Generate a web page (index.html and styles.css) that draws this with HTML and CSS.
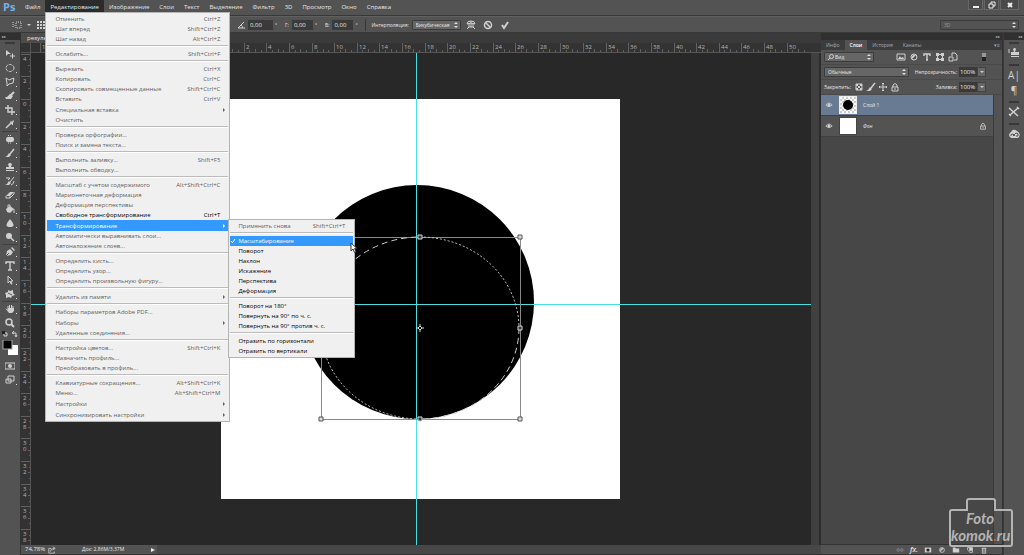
FILE: index.html
```html
<!DOCTYPE html>
<html lang="ru">

<head>
  <meta charset="UTF-8">
  <meta name="viewport" content="width=device-width, initial-scale=1.0">
  <title>Photoshop</title>
  <link rel="stylesheet" href="styles.css">
</head>

<body>
  <header class="menubar">
    <span class="logo">Ps</span>
    <nav class="menus">
      <button>Файл</button>
      <div class="menu-open">
        <button class="active">Редактирование</button>
        <ul class="menu">
          <li><button>Отменить<kbd>Ctrl+Z</kbd></button></li>
          <li><button>Шаг вперед<kbd>Shift+Ctrl+Z</kbd></button></li>
          <li><button>Шаг назад<kbd>Alt+Ctrl+Z</kbd></button></li>
          <li class="sep"></li>
          <li><button>Ослабить...<kbd>Shift+Ctrl+F</kbd></button></li>
          <li class="sep"></li>
          <li><button>Вырезать<kbd>Ctrl+X</kbd></button></li>
          <li><button>Копировать<kbd>Ctrl+C</kbd></button></li>
          <li><button>Скопировать совмещенные данные<kbd>Shift+Ctrl+C</kbd></button></li>
          <li><button>Вставить<kbd>Ctrl+V</kbd></button></li>
          <li><button class="more">Специальная вставка</button></li>
          <li><button>Очистить</button></li>
          <li class="sep"></li>
          <li><button>Проверка орфографии...</button></li>
          <li><button>Поиск и замена текста...</button></li>
          <li class="sep"></li>
          <li><button>Выполнить заливку...<kbd>Shift+F5</kbd></button></li>
          <li><button>Выполнить обводку...</button></li>
          <li class="sep"></li>
          <li><button>Масштаб с учетом содержимого<kbd>Alt+Shift+Ctrl+C</kbd></button></li>
          <li><button>Марионеточная деформация</button></li>
          <li><button>Деформация перспективы</button></li>
          <li><button class="on">Свободное трансформирование<kbd>Ctrl+T</kbd></button></li>
          <li class="has-sub">
            <button class="more hover">Трансформирование</button>
            <ul class="menu submenu">
              <li><button>Применить снова<kbd>Shift+Ctrl+T</kbd></button></li>
              <li class="sep"></li>
              <li><button class="hover checked">
                <svg class="check" viewBox="0 0 6 6"><path d="M1 3l1.500 1.800L5 1" /></svg>Масштабирование</button></li>
              <li><button class="on">Поворот</button></li>
              <li><button class="on">Наклон</button></li>
              <li><button class="on">Искажение</button></li>
              <li><button class="on">Перспектива</button></li>
              <li><button class="on">Деформация</button></li>
              <li class="sep"></li>
              <li><button class="on">Поворот на 180°</button></li>
              <li><button class="on">Повернуть на 90° по ч. с.</button></li>
              <li><button class="on">Повернуть на 90° против ч. с.</button></li>
              <li class="sep"></li>
              <li><button class="on">Отразить по горизонтали</button></li>
              <li><button class="on">Отразить по вертикали</button></li>
            </ul>
            <svg class="cursor" viewBox="0 0 8 12"><path d="M1 1v8l2-2 1.500 3.500 1.500-.7L4.600 6.500H7z" /></svg>
          </li>
          <li><button>Автоматически выравнивать слои...</button></li>
          <li><button>Автоналожение слоев...</button></li>
          <li class="sep"></li>
          <li><button>Определить кисть...</button></li>
          <li><button>Определить узор...</button></li>
          <li><button>Определить произвольную фигуру...</button></li>
          <li class="sep"></li>
          <li><button class="more">Удалить из памяти</button></li>
          <li class="sep"></li>
          <li><button>Наборы параметров Adobe PDF...</button></li>
          <li><button class="more">Наборы</button></li>
          <li><button>Удаленные соединения...</button></li>
          <li class="sep"></li>
          <li><button>Настройка цветов...<kbd>Shift+Ctrl+K</kbd></button></li>
          <li><button>Назначить профиль...</button></li>
          <li><button>Преобразовать в профиль...</button></li>
          <li class="sep"></li>
          <li><button>Клавиатурные сокращения...<kbd>Alt+Shift+Ctrl+K</kbd></button></li>
          <li><button>Меню...<kbd>Alt+Shift+Ctrl+M</kbd></button></li>
          <li><button class="more">Настройки</button></li>
          <li><button class="more">Синхронизировать настройки</button></li>
        </ul>
      </div>
      <button>Изображение</button>
      <button>Слои</button>
      <button>Текст</button>
      <button>Выделение</button>
      <button>Фильтр</button>
      <button>3D</button>
      <button>Просмотр</button>
      <button>Окно</button>
      <button>Справка</button>
    </nav>
    <div class="window-buttons">
      <button aria-label="Свернуть"><svg viewBox="0 0 8 8"><path d="M1 6h6" stroke-width="2" /></svg></button>
      <button aria-label="Развернуть"><svg viewBox="0 0 8 8"><path d="M3 3V1h4v4H5M1 3h4v4H1z" /></svg></button>
      <button class="close" aria-label="Закрыть"><svg viewBox="0 0 8 8"><path d="M2 2l4 4M6 2L2 6" stroke-width="2" /></svg></button>
    </div>
  </header>

  <div class="options">
    <div class="preset">
      <svg class="icon" viewBox="0 0 10 10"><path d="M1 2v5l2-2M4 2h5v6H4z" stroke-dasharray="1 1" /></svg>
      <i class="caret"></i>
      <svg class="icon" viewBox="0 0 10 10"><path class="fill" d="M1 1h2v2H1zM4 1h2v2H4zM7 1h2v2H7zM1 4h2v2H1zM4 4h2v2H4zM7 4h2v2H7zM1 7h2v2H1zM4 7h2v2H4zM7 7h2v2H7z" /></svg>
    </div>
    <svg class="icon angle" viewBox="0 0 10 10"><path d="M8 2L2 8h7M5 5c1 .500 1.500 2 1.500 3" /></svg>
    <input class="wide" aria-label="Угол" value="0,00"><span class="deg">°</span>
    <label for="skew-h">Г:</label><input id="skew-h" value="0,00"><span class="deg">°</span>
    <label for="skew-v">В:</label><input id="skew-v" value="0,00"><span class="deg">°</span>
    <i class="divider"></i>
    <label for="interp">Интерполяция:</label>
    <select id="interp"><option>Бикубическая</option></select>
    <div class="actions">
      <button aria-label="Деформация"><svg class="icon" viewBox="0 0 10 10"><path d="M1 4q0-3 4-3t4 3q-4-2-8 0zM3 3v4M7 3v4M5 1v6M3 7h4M1 9l2-2M9 9L7 7" /></svg></button>
      <button aria-label="Отмена"><svg class="icon" viewBox="0 0 10 10"><g stroke-width="1.500"><circle cx="5" cy="5" r="3.500" /><path d="M2.500 2.500l5 5" /></g></svg></button>
      <button aria-label="Применить"><svg class="icon" viewBox="0 0 10 10"><path d="M2 5l2 3 4-6" stroke-width="2" /></svg></button>
    </div>
    <select class="workspace" aria-label="Рабочая среда"><option>3D</option></select>
  </div>

  <main class="workarea">
    <aside class="tools">
      <div class="dock-head">▸▸</div>
      <i class="grip"></i>
      <button aria-label="Перемещение"><svg class="icon" viewBox="0 0 10 10"><path class="fill" d="M1 1v6l2-2h3z" /><path d="M7.500 4.500v5M5 7h5" /></svg></button>
      <button class="nested" aria-label="Овальная область"><svg class="icon" viewBox="0 0 10 10"><ellipse cx="5" cy="5" rx="4" ry="3.500" stroke-dasharray="3 1" /></svg></button>
      <button class="nested" aria-label="Лассо"><svg class="icon" viewBox="0 0 10 10"><path d="M1 1l3 2 5-2-1 5-4 1-2 2V6z" /></svg></button>
      <button class="nested" aria-label="Быстрое выделение"><svg class="icon" viewBox="0 0 10 10"><path d="M9 1L5 5" stroke-width="2" /><path class="fill" d="M5 3L2 6H0l1 2h5l2-3z" /></svg></button>
      <button class="nested" aria-label="Рамка"><svg class="icon" viewBox="0 0 10 10"><path d="M3 0v7h7M0 3h7v7" stroke-width="1.400" /></svg></button>
      <button class="nested" aria-label="Пипетка"><svg class="icon" viewBox="0 0 10 10"><path d="M6 4L2 8 1 9" stroke-width="1.500" /><path class="fill" d="M5 3l1-1 1 1 1-2 1 1-1 2v2L7 6z" /></svg></button>
      <i class="line"></i>
      <button class="nested" aria-label="Восстанавливающая кисть"><svg class="icon" viewBox="0 0 10 10"><rect class="fill" x="1" y="3" width="8" height="5" rx="2" /><path d="M3 1.500h4M3 9h4" stroke-dasharray="1 1" /></svg></button>
      <button class="nested" aria-label="Кисть"><svg class="icon" viewBox="0 0 10 10"><path d="M9 1L5 6" stroke-width="1.500" /><path class="fill" d="M4 5l2 2-2 2H0l2-1z" /></svg></button>
      <button class="nested" aria-label="Штамп"><svg class="icon" viewBox="0 0 10 10"><path class="fill" d="M4 5L3 2q2-2 4 0L6 5h3v2H1V5zM1 8h8v1H1z" /></svg></button>
      <button class="nested" aria-label="Архивная кисть"><svg class="icon" viewBox="0 0 10 10"><path d="M9 1L5 6M1 2h4L3 4M6 9q3-1 3-4" /><path class="fill" d="M4 5l2 2-2 2H0l2-1z" /></svg></button>
      <button class="nested" aria-label="Ластик"><svg class="icon" viewBox="0 0 10 10"><path class="fill" d="M1 6l4-4h4L5 6z" /><path d="M1 6v2h4V6M5 8l4-4V2" /></svg></button>
      <button class="nested" aria-label="Заливка"><svg class="icon" viewBox="0 0 10 10"><path class="fill" d="M1 5l4-3 4 3-4 4-3-1z" /><path d="M5 4V1H3v3M9 5v4" /></svg></button>
      <button class="nested" aria-label="Размытие"><svg class="icon" viewBox="0 0 10 10"><path class="fill" d="M5 1q7 8 0 8t0-8z" /></svg></button>
      <button class="nested" aria-label="Осветлитель"><svg class="icon" viewBox="0 0 10 10"><circle class="fill" cx="4" cy="4" r="3" /><path d="M6 6l3 3" stroke-width="1.500" /></svg></button>
      <i class="line"></i>
      <button class="nested" aria-label="Перо"><svg class="icon" viewBox="0 0 10 10"><path class="fill" d="M1 9l1-5 3-2 3 3-2 3zM6 1l3 3 1-1-3-3z" /><path class="dark" d="M1 9l3-3" /></svg></button>
      <button class="nested" aria-label="Текст"><svg class="icon" viewBox="0 0 10 10"><path d="M1 3V1h8v2M5 1v8M3 9h4" stroke-width="1.400" /></svg></button>
      <button class="nested" aria-label="Выделение контура"><svg class="icon" viewBox="0 0 10 10"><path d="M3 1v7l2-2 1 3h1L6 6h2z" /></svg></button>
      <button class="nested" aria-label="Фигура"><svg class="icon" viewBox="0 0 10 10"><path class="fill" d="M3 1l2 1 3-1v3l2 2-3 1-1 2-2-1-3 1V6L0 4l3-1z" /><path class="dark" d="M3 4l4 2" /></svg></button>
      <i class="line"></i>
      <button class="nested" aria-label="Рука"><svg class="icon" viewBox="0 0 10 10"><path d="M3 6V2M4.500 5V1M6.500 5V1M8 5V2" /><path class="fill" d="M0 4l3 2V4h6v3L7 9H4z" /></svg></button>
      <button aria-label="Масштаб"><svg class="icon" viewBox="0 0 10 10"><circle cx="4" cy="4" r="3" stroke-width="1.500" /><path d="M6 6l3 3" stroke-width="2" /></svg></button>
      <div class="mini">
        <svg class="mini-icon" viewBox="0 0 6 6"><path d="M2 2h3v3H2z" /><path class="dark-fill" d="M0 0h3v3H0z" /></svg>
        <svg class="mini-icon" viewBox="0 0 6 6"><path d="M2 0L0 2l2 1M1 2h3v3M3 4l1 2 1-2" /></svg>
      </div>
      <svg class="swatches" viewBox="0 0 16 16"><rect x="6" y="5" width="10" height="10" fill="#fff" /><rect x="1" y="0" width="9" height="9" stroke="#aaa" /></svg>
      <button aria-label="Быстрая маска"><svg class="icon" viewBox="0 0 10 10"><path d="M0 2h10v6H0z" /><circle class="fill" cx="5" cy="5" r="2" /></svg></button>
      <button class="nested" aria-label="Режим экрана"><svg class="icon" viewBox="0 0 10 10"><path d="M3 1h6v5H3zM1 4h5v4H1z" /></svg></button>
    </aside>

    <section class="document">
      <div class="tabs"><span class="doc-tab">результат</span></div>
      <div class="ruler-row">
        <i class="corner"></i>
        <svg class="ruler-top" id="ruler-top"></svg>
      </div>
      <div class="canvas-row">
        <svg class="ruler-left" id="ruler-left"></svg>
        <svg class="canvas">
          <rect x="190" y="46" width="399" height="400" fill="#fff" />
          <circle cx="386" cy="249" r="117" />
          <g class="guides"><rect x="385" y="0" width="1" height="100%" /><rect x="0" y="251" width="100%" height="1" /></g>
          <rect class="bounds" x="290" y="184" width="199" height="182" />
          <g class="ants">
            <path stroke-dasharray="6 4" d="M290 275A99 91 0 0 1 389 184" />
            <path stroke-dasharray="2 2" d="M389 184A99 91 0 0 1 488 275" />
            <path stroke-dasharray="6 4" d="M488 275A99 91 0 0 1 389 366" />
            <path stroke-dasharray="2 2" d="M389 366A99 91 0 0 1 290 275" />
          </g>
          <path class="handles" d="M387 182h4v4h-4zM487 273h4v4h-4zM387 364h4v4h-4z" />
          <path class="handles outer" d="M288 182h4v4h-4zM487 182h4v4h-4zM288 364h4v4h-4zM487 364h4v4h-4z" />
          <path class="pivot" d="M389 273l2 2-2 2-2-2zM389 271v2M389 277v2M385 275h2M391 275h2" />
        </svg>
        <i class="scroll-v"></i>
      </div>
      <footer class="status">
        <span class="zoom">74,78%</span>
        <svg class="icon" viewBox="0 0 10 10"><path d="M4 3H1v6h7V7M3 7q0-4 5-4M6 1l3 2-3 2" /></svg>
        <span class="size">Док: 2,86M/3,37M</span>
        <i class="play"></i>
        <i class="scroll-h"></i>
      </footer>
    </section>

    <aside class="panel">
      <div class="dock-head right">▸▸</div>
      <div class="panel-tabs">
        <button>Инфо</button>
        <button class="active">Слои</button>
        <button>История</button>
        <button>Каналы</button>
        <span class="panel-menu">▾≡</span>
      </div>
      <div class="panel-row">
        <label class="search"><svg class="search-icon" viewBox="0 0 6 6"><circle cx="3.500" cy="2.500" r="2" /><path d="M2 4L0 6" /></svg>
          <select class="kind" aria-label="Фильтр слоев"><option>Вид</option></select></label>
        <div class="filters">
          <svg class="icon" viewBox="0 0 10 10"><path d="M1 2h8v6H1z" /><path class="fill" d="M2 7l2-3 1 2 2-1 1 2z" /></svg>
          <svg class="icon" viewBox="0 0 10 10"><circle cx="5" cy="5" r="3" /><path class="fill" d="M3 7A3 3 0 0 1 7 3z" /></svg>
          <svg class="icon" viewBox="0 0 10 10"><path d="M2 4V2h6v2M5 2v6M4 8h2" stroke-width="1.400" /></svg>
          <svg class="icon" viewBox="0 0 10 10"><path d="M2.500 2.500h5v5h-5z" /><path class="fill" d="M1 1h3v3H1zM6 1h3v3H6zM1 6h3v3H1zM6 6h3v3H6z" /></svg>
          <svg class="icon" viewBox="0 0 10 10"><path d="M4 4V1h3l2 2v5H6" /><path d="M1 5h4v4H1z" /></svg>
        </div>
        <i class="toggle"></i>
      </div>
      <div class="panel-row">
        <select class="blend" aria-label="Режим наложения"><option>Обычные</option></select>
        <div class="field"><label for="opacity">Непрозрачность:</label><input id="opacity" value="100%"><button aria-label="Непрозрачность"><i class="caret"></i></button></div>
      </div>
      <div class="panel-row">
        <span>Закрепить:</span>
        <div class="locks">
          <svg class="icon" viewBox="0 0 10 10"><path d="M2 2h6v6H2z" /><path class="fill" d="M2 2h2v2H2zM6 2h2v2H6zM4 4h2v2H4zM2 6h2v2H2zM6 6h2v2H6z" /></svg>
          <svg class="icon" viewBox="0 0 10 10"><path d="M9 1L5 6" stroke-width="1.500" /><path class="fill" d="M4 5l2 2-2 2H0l2-1z" /></svg>
          <svg class="icon" viewBox="0 0 10 10"><path d="M5 1v8M1 5h8M4 2l1-1 1 1M4 8l1 1 1-1M2 4L1 5l1 1M8 4l1 1-1 1" /></svg>
          <svg class="icon" viewBox="0 0 10 10"><path d="M3 5V3q2-3 4 0v2" /><path d="M2 5h6v4H2zM5 6v2" /></svg>
        </div>
        <div class="field"><label for="fill">Заливка:</label><input id="fill" value="100%"><button aria-label="Заливка"><i class="caret"></i></button></div>
      </div>
      <div class="layers">
        <ul class="layer-list">
          <li class="selected">
            <svg class="icon" viewBox="0 0 10 10"><path d="M1 5q4-5 8 0-4 4-8 0z" /><circle class="fill" cx="5" cy="5" r="2" /></svg>
            <span class="thumb checkers"><i class="dot"></i></span>
            <span>Слой 1</span>
          </li>
          <li>
            <svg class="icon" viewBox="0 0 10 10"><path d="M1 5q4-5 8 0-4 4-8 0z" /><circle class="fill" cx="5" cy="5" r="2" /></svg>
            <span class="thumb"></span>
            <em>Фон</em>
            <svg class="icon lock" viewBox="0 0 10 10"><path d="M3 5V3q2-3 4 0v2" /><path d="M2 5h6v4H2zM5 6v2" /></svg>
          </li>
        </ul>
      </div>
      <div class="panel-foot">
        <button aria-label="Связать слои"><svg class="icon dim" viewBox="0 0 10 10"><path d="M4 3.500H2q-2 1.500 0 3h2M6 3.500h2q2 1.500 0 3H6M3 5h4" /></svg></button>
        <button class="fx" aria-label="Стиль слоя">fx.</button>
        <button aria-label="Маска"><svg class="icon" viewBox="0 0 10 10"><path class="fill" d="M1 2h8v6H1z" /><circle class="dark-fill" cx="5" cy="5" r="2" /></svg></button>
        <button aria-label="Корректирующий слой"><svg class="icon" viewBox="0 0 10 10"><circle cx="5" cy="5" r="3" /><path class="fill" d="M3 7A3 3 0 0 1 7 3z" /></svg></button>
        <button aria-label="Группа"><svg class="icon" viewBox="0 0 10 10"><path class="fill" d="M1 2h3l1 1h4v5H1z" /></svg></button>
        <button aria-label="Новый слой"><svg class="icon" viewBox="0 0 10 10"><path d="M2 2h6v6H5L2 5z" /><path class="fill" d="M4 2h4v4H4z" /></svg></button>
        <button aria-label="Удалить"><svg class="icon" viewBox="0 0 10 10"><path d="M2 3h6M3 3v6h4V3M4 1h2M5 4v4" /></svg></button>
      </div>
    </aside>

    <aside class="dock">
      <div class="dock-head right">◂◂</div>
      <i class="grip"></i>
      <button aria-label="Источник клонов"><svg class="dock-icon" viewBox="0 0 12 12"><path class="fill" d="M6 5L5 2q2-2 3 0L7 5h4v3H3V5zM3 9h8v1H3z" /><path d="M1 2v4" /></svg></button>
      <i class="grip"></i>
      <button class="letter" aria-label="Символ">A|</button>
      <button class="letter" aria-label="Абзац">¶</button>
      <i class="grip"></i>
      <button aria-label="Инструменты"><svg class="dock-icon" viewBox="0 0 12 12"><path d="M1 2l9 8M10 2L2 9M9 1l2 2M1 8l2 2" stroke-width="1.500" /></svg></button>
      <i class="grip"></i>
      <button aria-label="Creative Cloud"><svg class="dock-icon" viewBox="0 0 12 12"><path class="fill" d="M3 10q-4-3 0-6 2-4 6-1 5 3 1 7z" /><path class="dark" d="M7 8L5 6q-3 0-2 2M5 8l3-3q3 0 2 3H8" /></svg></button>
    </aside>
  </main>

  <svg class="watermark" viewBox="0 0 66 50">
    <path d="M4 13h15V4q0-2 2-2h24q2 0 2 2v9h15q2 0 2 2v32q0 2-2 2H4q-2 0-2-2V15q0-2 2-2z" />
    <text x="18" y="27">Foto</text>
    <text x="3" y="44">komok<tspan class="accent">.</tspan>ru</text>
  </svg>

  <script src="script.js"></script>
</body>

</html>
```

FILE: styles.css
```css
:root {
  --bar: #535353;
  --panel: #474747;
  --dark: #282828;
  --line: #383838;
  --text: #e6e6e6;
  --field: #3a3a3a;
  --blue: #3399ff;
  --guide: #4adfdf;
}

* {
  margin: 0;
  padding: 0;
  box-sizing: border-box;
}

body {
  display: flex;
  flex-direction: column;
  height: 100vh;
  overflow: hidden;
  background: var(--dark);
  color: var(--text);
  font-family: "Open Sans", "Noto Sans", sans-serif;
  font-size: 5px;
  line-height: 10px;
}

button,
input,
select {
  border: none;
  background: none;
  color: inherit;
  font: inherit;
}

ul {
  list-style: none;
}

svg {
  flex: none;
}

.icon,
.mini-icon,
.search-icon,
.dock-icon,
.window-buttons svg {
  display: block;
  width: 10px;
  height: 10px;
  fill: none;
  stroke: #d0d0d0;
}

.icon .fill,
.dock-icon .fill {
  fill: #d0d0d0;
  stroke: none;
}

.icon .dark,
.dock-icon .dark {
  stroke: var(--bar);
}

.icon .dark-fill,
.mini-icon .dark-fill {
  fill: #222;
  stroke: none;
}

.dim {
  opacity: 0.5;
}

.caret {
  border: 2px solid transparent;
  border-top-color: #ccc;
  border-bottom: none;
}

/* menu bar */
.menubar {
  display: flex;
  height: 16px;
  padding-left: 3px;
  background: var(--bar);
  border-bottom: 1px solid var(--line);
}

.logo {
  width: 17px;
  color: #72b4e6;
  font-size: 11px;
  font-weight: 700;
  line-height: 14px;
}

.menus {
  display: flex;
  flex: 1;
  align-items: flex-start;
  font-size: 6px;
  font-weight: 500;
}

.menus > button,
.menu-open > button {
  display: block;
  height: 14px;
  padding: 0 5px;
  line-height: 14px;
}

.menu-open {
  position: relative;
}

.menu-open > .active {
  background: #2b2b2b;
}

.menu {
  position: absolute;
  z-index: 2;
  top: 12px;
  left: 0;
  width: 185px;
  padding: 1px;
  background: #f0f0f0;
  border: 1px solid #b4b4b4;
}

.menu button {
  display: flex;
  width: 100%;
  height: 10px;
  padding: 0 8px;
  color: #606060;
  line-height: 10px;
  white-space: nowrap;
  align-items: center;
}

.menu .more {
  height: 11px;
  padding-right: 3px;
}

.menu .more::after {
  content: "";
  margin-left: auto;
  border: 2px solid transparent;
  border-left-color: currentColor;
  border-right: none;
}

.menu .on {
  color: #000;
}

.menu .hover {
  background: var(--blue);
  color: #fff;
}

.menu kbd {
  margin-left: auto;
  font: inherit;
}

.menu .sep {
  height: 3px;
  margin-bottom: 2px;
  border-bottom: 1px solid #fff;
  box-shadow: inset 0 -1px #bbb;
}

.has-sub {
  position: relative;
}

.submenu {
  top: -1px;
  left: 181px;
  width: 127px;
}

.submenu .checked {
  gap: 2px;
  padding-left: 0;
}

.check {
  width: 6px;
  height: 6px;
  fill: none;
  stroke: #fff;
}

.cursor {
  position: absolute;
  z-index: 3;
  top: 22px;
  left: 303px;
  width: 8px;
  height: 12px;
  fill: #fff;
  stroke: #333;
}

.window-buttons {
  display: flex;
  gap: 1px;
  padding-right: 5px;
}

.window-buttons button {
  display: grid;
  place-items: center;
  width: 15px;
  height: 10px;
  background: #4a4a4a;
  border: 1px solid #666;
  border-top: none;
}

.window-buttons .close {
  width: 19px;
}

.window-buttons svg {
  width: 8px;
  height: 8px;
  stroke: #eee;
}

/* options bar */
.options {
  display: flex;
  align-items: center;
  height: 17px;
  padding-right: 5px;
  background: var(--bar);
  border-top: 1px solid #606060;
  border-bottom: 1px solid var(--line);
}

.preset {
  display: flex;
  align-items: center;
  gap: 5px;
  width: 236px;
  padding-left: 12px;
}

.options input {
  width: 21px;
  height: 10px;
  padding-left: 2px;
  background: var(--field);
  font-size: 6px;
}

.options .wide {
  width: 25px;
  margin-left: 2px;
}

.options label {
  margin-right: 3px;
}

.deg {
  width: 12px;
  padding-left: 2px;
}

.divider {
  width: 1px;
  height: 12px;
  margin-right: 5px;
  background: var(--line);
}

select {
  height: 10px;
  padding: 0 3px;
  appearance: none;
  border: 1px solid #3c3c3c;
  border-radius: 1px;
  background: #666 url("data:image/svg+xml,%3Csvg xmlns='http://www.w3.org/2000/svg' width='5' height='6'%3E%3Cpath fill='%23ddd' d='M0 2l2-2 2 2zM0 4h4L2 6z'/%3E%3C/svg%3E") no-repeat right 1px center;
  line-height: 8px;
}

#interp {
  width: 49px;
}

.actions {
  display: flex;
  gap: 7px;
  margin-left: 5px;
}

.options .workspace {
  width: 79px;
  margin-left: auto;
  background-color: var(--bar);
  color: #999;
}

/* work area */
.workarea {
  display: flex;
  flex: 1;
  min-height: 0;
}

.dock-head {
  height: 7px;
  padding: 0 2px;
  background: #303030;
  color: #bbb;
  font-size: 4px;
  line-height: 7px;
}

.dock-head.right {
  text-align: right;
}

.tools {
  display: flex;
  flex-direction: column;
  width: 21px;
  background: var(--bar);
  border-right: 1px solid #333;
}

.grip {
  display: block;
  height: 2px;
  margin: 2px 5px 3px;
  background: #383838;
}

.tools button {
  position: relative;
  display: grid;
  place-items: center;
  height: 14px;
}

.tools .nested::after {
  content: "";
  position: absolute;
  right: 3px;
  bottom: 2px;
  width: 1px;
  height: 1px;
  background: #ddd;
}

.line {
  height: 1px;
  margin: 0 2px;
  background: #404040;
}

.mini {
  display: flex;
  justify-content: center;
  gap: 4px;
  padding: 1px 0;
}

.mini-icon {
  width: 6px;
  height: 6px;
}

.swatches {
  width: 16px;
  height: 16px;
  margin: 2px 2px 3px;
}

.document {
  display: flex;
  flex: 1;
  flex-direction: column;
  min-width: 0;
}

.tabs {
  height: 10px;
  background: #3a3a3a;
  font-size: 6px;
}

.doc-tab {
  display: block;
  width: 120px;
  height: 10px;
  padding-left: 6px;
  background: #4c4c4c;
}

.ruler-row {
  display: flex;
  height: 10px;
  background: #333;
  border-bottom: 1px solid #555;
}

.corner {
  width: 10px;
  border-right: 1px solid #555;
}

.ruler-top {
  flex: 1;
  min-width: 0;
  height: 9px;
}

.canvas-row {
  display: flex;
  flex: 1;
  min-height: 0;
}

.ruler-left {
  width: 10px;
  height: 100%;
  background: #333;
  border-right: 1px solid #555;
}

.ruler-top path,
.ruler-left path {
  fill: none;
  stroke: #606060;
}

.ruler-top text,
.ruler-left text {
  fill: #b4b4b4;
  font-size: 6px;
}

.canvas {
  flex: 1;
  min-width: 0;
  height: 100%;
  background: var(--dark);
}

.guides {
  fill: var(--guide);
}

.bounds {
  fill: none;
  stroke: #888;
  shape-rendering: crispEdges;
}

.ants {
  fill: none;
  stroke: #ccc;
}

.handles {
  fill: #333;
  stroke: #ddd;
}

.handles.outer {
  fill: #ddd;
  stroke: #555;
}

.pivot {
  fill: none;
  stroke: #ddd;
}

.scroll-v {
  width: 10px;
  background: #404040;
  border-right: 2px solid #2c2c2c;
}

.status {
  display: flex;
  align-items: center;
  height: 10px;
  background: var(--bar);
  border-bottom: 1px solid #333;
  line-height: 9px;
}

.zoom {
  width: 27px;
  padding-left: 4px;
  font-size: 6px;
}

.status .icon {
  width: 8px;
  height: 8px;
}

.size {
  width: 95px;
  padding-left: 26px;
  white-space: nowrap;
}

.play {
  border: 2px solid transparent;
  border-left: 4px solid #eee;
  border-right: none;
}

.scroll-h {
  flex: 1;
  align-self: stretch;
  margin-left: 2px;
  background: #474747;
}

/* layers panel */
.panel {
  display: flex;
  flex-direction: column;
  width: 182px;
  background: var(--bar);
  border-right: 1px solid #333;
}

.panel-tabs {
  display: flex;
  height: 10px;
  background: #3c3c3c;
  color: #aaa;
}

.panel-tabs button {
  padding: 0 5px;
}

.panel-tabs .active {
  background: var(--bar);
  color: #fff;
  font-weight: 600;
}

.panel-menu {
  margin-left: auto;
  padding-right: 2px;
}

.panel-row {
  display: flex;
  align-items: center;
  height: 15px;
  padding: 0 16px 0 3px;
  border-bottom: 1px solid #4a4a4a;
}

.search {
  position: relative;
}

.search-icon {
  position: absolute;
  top: 2px;
  left: 4px;
  width: 6px;
  height: 6px;
}

.kind {
  display: block;
  width: 50px;
  padding-left: 10px;
}

.blend {
  width: 85px;
}

.filters {
  display: flex;
  gap: 3px;
  margin-left: 22px;
}

.toggle {
  width: 4px;
  height: 8px;
  margin-left: auto;
  background: linear-gradient(#999 50%, #222 50%);
}

.locks {
  display: flex;
  gap: 2px;
  margin-left: 3px;
}

.field {
  display: flex;
  align-items: center;
  margin-left: auto;
}

.field input {
  width: 18px;
  height: 10px;
  margin-left: 2px;
  padding-left: 1px;
  background: var(--field);
  font-size: 6px;
}

.field button {
  display: grid;
  place-items: center;
  width: 9px;
  height: 10px;
  background: #666;
  border: 1px solid #444;
}

.layers {
  flex: 1;
  padding-right: 8px;
  background: var(--bar);
}

.layer-list {
  height: 100%;
  background: var(--panel);
  border-right: 1px solid #3a3a3a;
}

.layer-list li {
  display: flex;
  align-items: center;
  gap: 4px;
  height: 21px;
  padding: 0 6px 0 4px;
  background: var(--bar);
  border-bottom: 1px solid #404040;
}

.layer-list .selected {
  background: #697b93;
}

.layer-list .icon {
  width: 8px;
  height: 8px;
}

.thumb {
  display: grid;
  place-items: center;
  width: 18px;
  height: 18px;
  margin: 0 2px;
  background: #fff;
  border: 1px solid #444;
}

.checkers {
  background: repeating-conic-gradient(#ccc 0 25%, #fff 0 50%) 0 0 / 4px 4px;
  border-color: #eee;
}

.dot {
  width: 10px;
  height: 10px;
  border-radius: 50%;
  background: #000;
}

.layer-list .lock {
  margin-left: auto;
}

.panel-foot {
  display: flex;
  justify-content: flex-end;
  align-items: center;
  gap: 4px;
  height: 11px;
  padding-right: 13px;
  border-top: 1px solid #333;
  border-bottom: 1px solid #333;
}

.panel-foot .icon {
  width: 10px;
  height: 8px;
}

.fx {
  width: 10px;
  font-size: 7px;
  font-style: italic;
  font-weight: 600;
}

.dock {
  width: 21px;
  background: var(--bar);
  border-left: 1px solid #3a3a3a;
}

.dock .grip {
  margin: 4px 5px 1px;
}

.dock .dock-head + .grip {
  margin-top: 2px;
}

.dock button {
  display: grid;
  place-items: center;
  width: 100%;
  height: 15px;
}

.dock-icon {
  width: 12px;
  height: 12px;
}

.dock .letter {
  color: #d0d0d0;
  font-size: 10px;
}

.watermark {
  position: absolute;
  right: 10px;
  bottom: 8px;
  width: 66px;
  height: 50px;
  fill: none;
  stroke: #b4b4b4;
  stroke-width: 2;
}

.watermark text {
  fill: #b4b4b4;
  stroke: none;
  font-family: Lato, sans-serif;
  font-size: 15px;
  font-style: italic;
  font-weight: 700;
}

.watermark .accent {
  fill: #c0603c;
}
```

FILE: script.js
```js
// Rulers: one labelled mark every two centimetres, four ticks between marks
const STEP = 543 / 24;
const SMALL = 4;

function tickHeight(i) {
  return i === 0 ? 10 : i === 2 ? 3 : 2;
}

function drawTop(svg, origin) {
  let d = '';
  let labels = '';
  for (let n = -8; n <= 25; n++) {
    const x = origin + n * STEP;
    for (let i = 0; i < SMALL; i++) {
      d += `M${Math.round(x + i * STEP / SMALL) + 0.5} 9v-${tickHeight(i)}`;
    }
    labels += `<text x="${Math.round(x) + 2}" y="6">${Math.abs(n * 2)}</text>`;
  }
  svg.innerHTML = `<path d="${d}"/>${labels}`;
}

function drawLeft(svg, origin) {
  let d = '';
  let labels = '';
  for (let n = -2; n <= 19; n++) {
    const y = origin + n * STEP;
    for (let i = 0; i < SMALL; i++) {
      d += `M10 ${Math.round(y + i * STEP / SMALL) + 0.5}h-${tickHeight(i)}`;
    }
    // digits are stacked one under another
    String(Math.abs(n * 2)).split('').forEach((digit, k) => {
      labels += `<text x="2" y="${Math.round(y) + 7 + k * 6}">${digit}</text>`;
    });
  }
  svg.innerHTML = `<path d="${d}"/>${labels}`;
}

drawTop(document.getElementById('ruler-top'), 190);
drawLeft(document.getElementById('ruler-left'), 46);
```
